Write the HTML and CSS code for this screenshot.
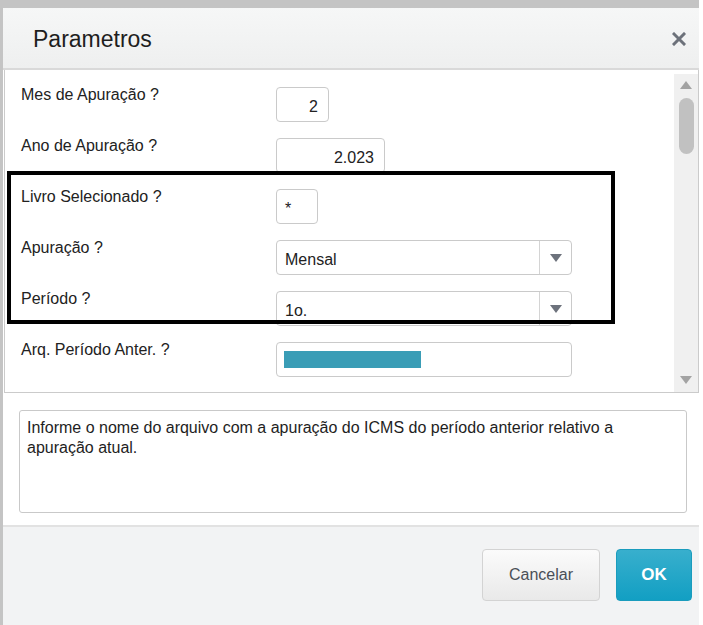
FILE: index.html
```html
<!DOCTYPE html>
<html lang="pt-BR">
<head>
  <meta charset="UTF-8" />
  <meta name="viewport" content="width=device-width, initial-scale=1.0"/>
  <title>Parametros</title>
  <link rel="stylesheet" href="styles.css">
</head>
<body>
  <div class="backdrop">
    <div class="dialog">
      <div class="dlg-head">
        <h1 class="dlg-title">Parametros</h1>
        <svg class="dlg-close" width="14" height="14" viewBox="0 0 14 14">
          <path d="M2 2 L12 12 M12 2 L2 12" stroke="#6c717a" stroke-width="3" stroke-linecap="square" fill="none"/>
        </svg>
      </div>

      <div class="panel">
        <div class="form">
          <div class="row">
            <label class="lbl">Mes de Apuração ?</label>
            <div class="field num w-mes">2</div>
          </div>
          <div class="row">
            <label class="lbl">Ano de Apuração ?</label>
            <div class="field num w-ano">2.023</div>
          </div>
          <div class="row">
            <label class="lbl">Livro Selecionado ?</label>
            <div class="field w-livro">*</div>
          </div>
          <div class="row">
            <label class="lbl">Apuração ?</label>
            <div class="field combo">
              <span class="combo-text">Mensal</span>
              <span class="combo-btn"><i class="caret"></i></span>
            </div>
          </div>
          <div class="row">
            <label class="lbl">Período ?</label>
            <div class="field combo">
              <span class="combo-text">1o.</span>
              <span class="combo-btn"><i class="caret"></i></span>
            </div>
          </div>
          <div class="row">
            <label class="lbl">Arq. Período Anter. ?</label>
            <div class="field w-arq"><span class="sel"></span></div>
          </div>
        </div>

        <div class="vscroll">
          <i class="arrow-up"></i>
          <div class="thumb"></div>
          <div class="track"></div>
          <i class="arrow-down"></i>
        </div>

        <!-- destaque em volta dos parametros de livro/apuracao/periodo -->
        <div class="mark"></div>
      </div>

      <div class="help-area">
        <div class="help">Informe o nome do arquivo com a apuração do ICMS do período anterior relativo a apuração atual.</div>
      </div>

      <div class="dlg-foot">
        <button class="btn btn-cancel">Cancelar</button>
        <button class="btn btn-ok">OK</button>
      </div>
    </div>
  </div>
</body>
</html>
```

FILE: styles.css
```css
* {
  box-sizing: border-box;
}
body {
  margin: 0;
  background: #fff;
  font-family: "Liberation Sans", Arial, sans-serif;
  color: #222;
}
.backdrop {
  width: 699px;
  height: 625px;
  background: #c4c4c4;
  padding: 8px 0 0 3px;
  overflow: hidden;
}
.dialog {
  width: 696px;
  height: 617px;
  background: #fff;
  display: flex;
  flex-direction: column;
}

/* cabecalho */
.dlg-head {
  height: 62px;
  display: flex;
  align-items: center;
  justify-content: space-between;
  padding: 0 13px 0 30px;
  background: linear-gradient(#f6f7f7, #eeefef);
  border-bottom: 2px solid #d9d9d9;
}
.dlg-title {
  margin: 0;
  font-size: 23px;
  font-weight: normal;
  color: #1e1e1e;
  padding-top: 2px;
}
.dlg-close {
  display: block;
  margin-top: 2px;
}

/* area com os parametros */
.panel {
  position: relative;
  height: 323px;
  margin-left: 1px;
  border: 1px solid #cbcbcb;
  border-top: none;
  display: flex;
}
.form {
  flex: 1;
  padding: 17px 0 0 16px;
  display: flex;
  flex-direction: column;
  gap: 16px;
}
.row {
  display: grid;
  grid-template-columns: 255px auto;
  height: 35px;
}
.lbl {
  font-size: 16px;
  line-height: 16px;
  color: #222;
}
.field {
  height: 35px;
  border: 1px solid #cacaca;
  border-radius: 4px;
  background: #fff;
  font-size: 16px;
  color: #222;
  padding: 10px 10px 0;
  line-height: 17px;
}
.num {
  text-align: right;
}
.w-mes { width: 53px; }
.w-ano { width: 109px; }
.w-livro { width: 42px; padding-left: 8px; }
.w-arq { width: 296px; padding: 8px 7px 0; }
.sel {
  display: block;
  width: 137px;
  height: 17px;
  background: #3a9db6;
}
.combo {
  width: 296px;
  padding: 0;
  display: flex;
}
.combo-text {
  flex: 1;
  padding: 10px 0 0 8px;
}
.combo-btn {
  width: 32px;
  border-left: 1px solid #d4d4d4;
  display: flex;
  align-items: center;
  justify-content: center;
  padding-top: 1px;
}
.caret {
  width: 0;
  height: 0;
  border-left: 6px solid transparent;
  border-right: 6px solid transparent;
  border-top: 8px solid #6d727c;
}

/* barra de rolagem */
.vscroll {
  width: 24px;
  margin-top: 4px;
  background: #f0f0f0;
  display: flex;
  flex-direction: column;
  align-items: center;
  padding: 7px 0 8px;
}
.arrow-up {
  width: 0;
  height: 0;
  border-left: 6px solid transparent;
  border-right: 6px solid transparent;
  border-bottom: 8px solid #a3a3a3;
}
.arrow-down {
  width: 0;
  height: 0;
  border-left: 6px solid transparent;
  border-right: 6px solid transparent;
  border-top: 8px solid #a3a3a3;
}
.thumb {
  width: 15px;
  height: 56px;
  margin-top: 9px;
  border-radius: 8px;
  background: #c1c1c1;
}
.track {
  flex: 1;
}

.mark {
  position: absolute;
  left: 2px;
  top: 101px;
  width: 608px;
  height: 153px;
  border: 4px solid #000;
  pointer-events: none;
}

/* texto de ajuda */
.help-area {
  padding: 17px 12px 12px 16px;
}
.help {
  height: 103px;
  border: 1px solid #c9c9c9;
  border-radius: 3px;
  padding: 7px 7px;
  font-size: 16px;
  line-height: 20px;
  color: #1e1e1e;
}

/* rodape */
.dlg-foot {
  flex: 1;
  border-top: 2px solid #e2e2e2;
  background: #f2f3f4;
  display: flex;
  justify-content: flex-end;
  align-items: flex-start;
  gap: 16px;
  padding: 22px 7px 0 0;
}
.btn {
  height: 52px;
  border-radius: 4px;
  font-family: "Liberation Sans", Arial, sans-serif;
  font-size: 16px;
  cursor: pointer;
}
.btn-cancel {
  width: 118px;
  border: 1px solid #d3d3d3;
  background: linear-gradient(#fbfbfb, #e9e9e9);
  color: #4a4f57;
}
.btn-ok {
  width: 76px;
  border: 1px solid #1a9cbd;
  background: linear-gradient(#38afcd, #129fc3);
  color: #fff;
  font-weight: bold;
  font-size: 17px;
}
```
